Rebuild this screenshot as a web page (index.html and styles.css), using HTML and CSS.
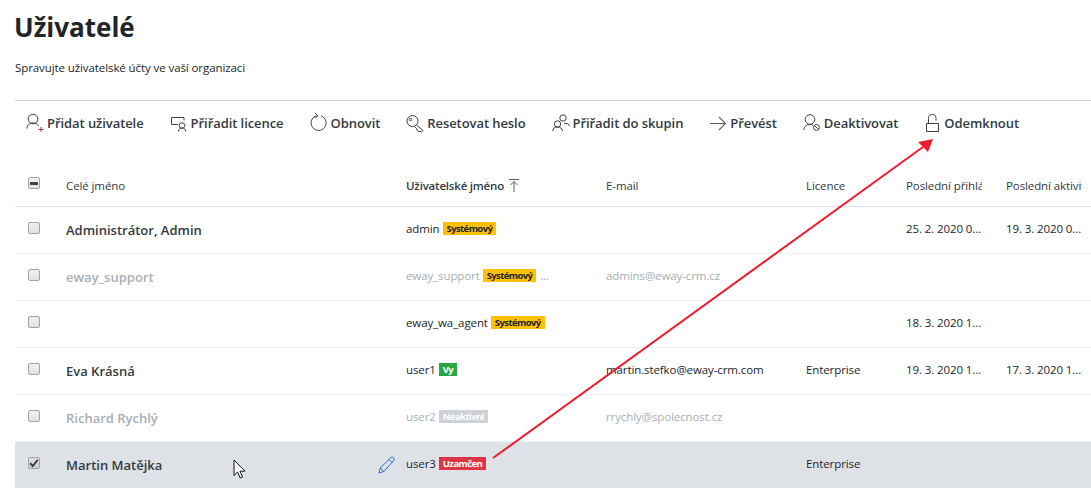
FILE: index.html
```html
<!DOCTYPE html>
<html lang="cs">
<head>
<meta charset="utf-8">
<title>Uživatelé</title>
<link rel="stylesheet" href="styles.css">
</head>
<body>
<main class="page">
  <header class="head">
    <h1 class="title">Uživatelé</h1>
    <p class="subtitle">Spravujte uživatelské účty ve vaší organizaci</p>
  </header>
  <nav class="toolbar">
    <button class="tool"><svg class="ico" width="18" height="22" viewBox="0 0 18 22"><g fill="none" stroke="#3b3f46"><circle cx="7" cy="7" r="4.800"/><path d="M1 16.500c0-4 2.800-5.500 6-5.500 2.500 0 4.500 1 5.500 3"/></g><path d="M12.500 17.500h5M15 15v5" stroke="#a4286a" fill="none"/></svg>Přidat uživatele</button>
    <button class="tool"><svg class="ico" width="18" height="22" viewBox="0 0 18 22"><g fill="none" stroke="#3b3f46"><path d="M8 12.500H1.500v-7H14v3"/><circle cx="12" cy="13.500" r="2.800"/><path d="M8.500 19.500c0-2.500 1.500-3.500 3.500-3.500s3.800 1 3.800 3.500"/></g></svg>Přiřadit licence</button>
    <button class="tool"><svg class="ico" width="18" height="22" viewBox="0 0 18 22"><path d="M11 3.800a7.500 7.500 0 1 1-4.800 0M5 1l3 3-3.500 1.500" fill="none" stroke="#3b3f46"/></svg>Obnovit</button>
    <button class="tool"><svg class="ico" width="18" height="22" viewBox="0 0 18 22"><g fill="none" stroke="#3b3f46"><circle cx="6.500" cy="9" r="5.500"/><circle cx="4.500" cy="7.500" r="1.200"/><path d="M10.500 13l6.500 5.500-1.500 1.500-1.500-1-1 1-1-1.500-1-.5-.5-1.500-1.500-1.500"/></g></svg>Resetovat heslo</button>
    <button class="tool"><svg class="ico" width="18" height="22" viewBox="0 0 18 22"><g fill="none" stroke="#3b3f46"><circle cx="5.500" cy="12" r="3.200"/><path d="M.8 19c0-3 2-4 4.700-4s4.500 1 5 4"/><circle cx="11" cy="6" r="3.200"/><path d="M12 11.500c3-.5 5 .5 5.500 2.500"/></g></svg>Přiřadit do skupin</button>
    <button class="tool"><svg class="ico" width="18" height="22" viewBox="0 0 18 22"><path d="M1 11.500h15.500M10 5l6.500 6.500L10 18" fill="none" stroke="#5c5f63" stroke-width="1.100"/></svg>Převést</button>
    <button class="tool"><svg class="ico" width="18" height="22" viewBox="0 0 18 22"><g fill="none" stroke="#3b3f46"><circle cx="7" cy="7.500" r="4.800"/><path d="M1 18c0-4 3-5.500 6-5.500 1 0 2 .2 3 .6"/><circle cx="13.500" cy="15.500" r="3"/><path d="M11.500 13.500l4 4"/></g></svg>Deaktivovat</button>
    <button class="tool unlock"><svg class="ico" width="18" height="22" viewBox="0 0 18 22"><g fill="none" stroke="#3b3f46"><path d="M1.500 11.500h12v8h-12z"/><path d="M3.500 11.500V6.500c0-2.500 1.500-4 4-4s3.500 1.500 3.500 4v2"/></g></svg>Odemknout</button>
  </nav>

  <section class="table">
    <div class="row head-row">
      <span class="check"><span class="box mixed"></span></span>
      <span class="cell">Celé jméno</span>
      <span class="cell sort">Uživatelské jméno<svg class="sort-ico" width="10" height="13" viewBox="0 0 10 13"><path d="M0 .500h10M5 13V2.500M1.500 6L5 2.500 8.500 6" fill="none" stroke="#55595f"/></svg></span>
      <span class="cell">E-mail</span>
      <span class="cell">Licence</span>
      <span class="cell clip">Poslední přihlášení</span>
      <span class="cell clip">Poslední aktivita</span>
    </div>
    <div class="row">
      <span class="check"><span class="box"></span></span>
      <span class="cell name">Administrátor, Admin</span>
      <span class="cell">admin<span class="tag sys">Systémový</span></span>
      <span class="cell"></span><span class="cell"></span>
      <span class="cell clip">25. 2. 2020 0...</span>
      <span class="cell clip">19. 3. 2020 0...</span>
    </div>
    <div class="row off">
      <span class="check"><span class="box"></span></span>
      <span class="cell name">eway_support</span>
      <span class="cell">eway_support<span class="tag sys">Systémový</span><span class="more">...</span></span>
      <span class="cell">admins@eway-crm.cz</span><span class="cell"></span>
      <span class="cell"></span><span class="cell"></span>
    </div>
    <div class="row">
      <span class="check"><span class="box"></span></span>
      <span class="cell name"></span>
      <span class="cell">eway_wa_agent<span class="tag sys">Systémový</span></span>
      <span class="cell"></span><span class="cell"></span>
      <span class="cell clip">18. 3. 2020 1...</span><span class="cell"></span>
    </div>
    <div class="row">
      <span class="check"><span class="box"></span></span>
      <span class="cell name">Eva Krásná</span>
      <span class="cell">user1<span class="tag you">Vy</span></span>
      <span class="cell">martin.stefko@eway-crm.com</span><span class="cell">Enterprise</span>
      <span class="cell clip">19. 3. 2020 1...</span>
      <span class="cell clip">17. 3. 2020 1...</span>
    </div>
    <div class="row off">
      <span class="check"><span class="box"></span></span>
      <span class="cell name">Richard Rychlý</span>
      <span class="cell">user2<span class="tag ina">Neaktivní</span></span>
      <span class="cell">rrychly@spolecnost.cz</span><span class="cell"></span>
      <span class="cell"></span><span class="cell"></span>
    </div>
    <div class="row selected">
      <span class="check"><span class="box checked"><svg width="10" height="10" viewBox="0 0 10 10"><path d="M1.200 5.200l2.500 2.800L8.800 1.800" fill="none" stroke="#333" stroke-width="1.800"/></svg></span></span>
      <span class="cell name">Martin Matějka<svg class="pencil" width="18" height="18" viewBox="0 0 18 18"><path d="M1 17l1.300-5L12.500 1.800c1-.9 2.200-.9 3 0s.9 2 .1 2.900L5.800 15.500zM2.300 12l3.500 3.500M11 3.500l3.500 3.500" fill="none" stroke="#2b6cc4"/></svg></span>
      <span class="cell">user3<span class="tag lock">Uzamčen</span></span>
      <span class="cell"></span><span class="cell">Enterprise</span>
      <span class="cell"></span><span class="cell"></span>
    </div>
  </section>

  <svg class="arrow" width="460" height="340" viewBox="0 0 460 340"><path d="M13 328L443 17" stroke="#ed1c2e" stroke-width="2" fill="none"/><path d="M453 9L438 12l10 10z" fill="#ed1c2e"/></svg>
  <svg class="cursor" width="16" height="22" viewBox="0 0 16 22"><path d="M1 1v15.500l3.600-3.500 2.600 6 2.400-1-2.600-5.800h5z" fill="#fff" stroke="#111"/></svg>
</main>
</body>
</html>
```
FILE: styles.css
```css
* { box-sizing: border-box; }
html, body { margin: 0; height: 100%; overflow: hidden; background: #fff; }
body { font-family: "Open Sans", "Noto Sans", sans-serif; color: #212529; }
.page { position: relative; width: 1091px; height: 500px; padding-left: 15px; overflow: hidden; }
.head { height: 100px; padding-top: 8px; }
.title { margin: 0 0 0 -1px; font-size: 26px; line-height: 38px; font-weight: 700; color: #212529; }
.subtitle { margin: 13px 0 0; font-size: 11.5px; line-height: 18px; letter-spacing: -.09px; color: #212529; }
.toolbar { display: flex; align-items: center; gap: 26px; height: 45px; border-top: 1px solid #cfcfcf; padding-left: 11px; }
.tool { display: flex; align-items: center; padding: 0; border: 0; background: none; font: 600 13px/20px "Open Sans", sans-serif; letter-spacing: -.07px; color: #333a42; white-space: nowrap; }
.ico { flex: none; margin-right: 3px; }
.unlock { margin-left: 1px; }
.unlock .ico { margin-right: 1px; }
.table { margin-top: 15px; }
.row { display: grid; grid-template-columns: 51px 340px 200px 200px 100px 100px 85px; align-items: center; height: 47px; border-bottom: 1px solid #f0f1f3; font-size: 11.5px; letter-spacing: -.1px; }
.head-row { padding-top: 6px; border-bottom-color: #dfe2e6; color: #333a42; }
.cell { display: flex; align-items: center; min-width: 0; padding: 0 24px 3px 0; white-space: nowrap; position: relative; overflow: hidden; }
.head-row .cell { padding-bottom: 1px; }
.clip { padding-right: 0; width: 76px; }
.name { padding-bottom: 0; font-size: 13px; font-weight: 600; letter-spacing: 0; color: #333a42; overflow: visible; }
.check { display: flex; padding-left: 13px; margin-top: -4px; }
.head-row .check { margin-top: -6px; }
.box { display: flex; align-items: center; justify-content: center; width: 12px; height: 12px; border: 1px solid #a3a3a3; border-radius: 2px; background: linear-gradient(#f0f0f0, #e2e2e2); }
.mixed::after { content: ""; width: 8px; height: 3px; background: #444; }
.checked { background: linear-gradient(#e0e0e0, #cfcfcf); }
.sort { font-weight: 600; letter-spacing: -.2px; }
.sort-ico { margin-left: 5px; flex: none; }
.tag { display: inline-block; margin-left: 3px; padding: 0 4px; font-size: 9.5px; line-height: 13px; font-weight: 700; letter-spacing: -.6px; }
.sys { background: #ffc107; color: #212529; }
.you { background: #28a745; color: #fff; }
.ina { background: #ced1d6; color: #fff; }
.lock { background: #dc3545; color: #fff; }
.more { margin-left: 4px; }
.off .cell { color: #a9aeb5; }
.off .tag.sys { color: #212529; }
.selected { height: 46px; background: #dee1e6; border-bottom: 0; }
.pencil { position: absolute; left: 312px; top: 50%; margin-top: -9px; }
.arrow { position: absolute; left: 480px; top: 130px; pointer-events: none; }
.cursor { position: absolute; left: 233px; top: 459px; pointer-events: none; }
```
